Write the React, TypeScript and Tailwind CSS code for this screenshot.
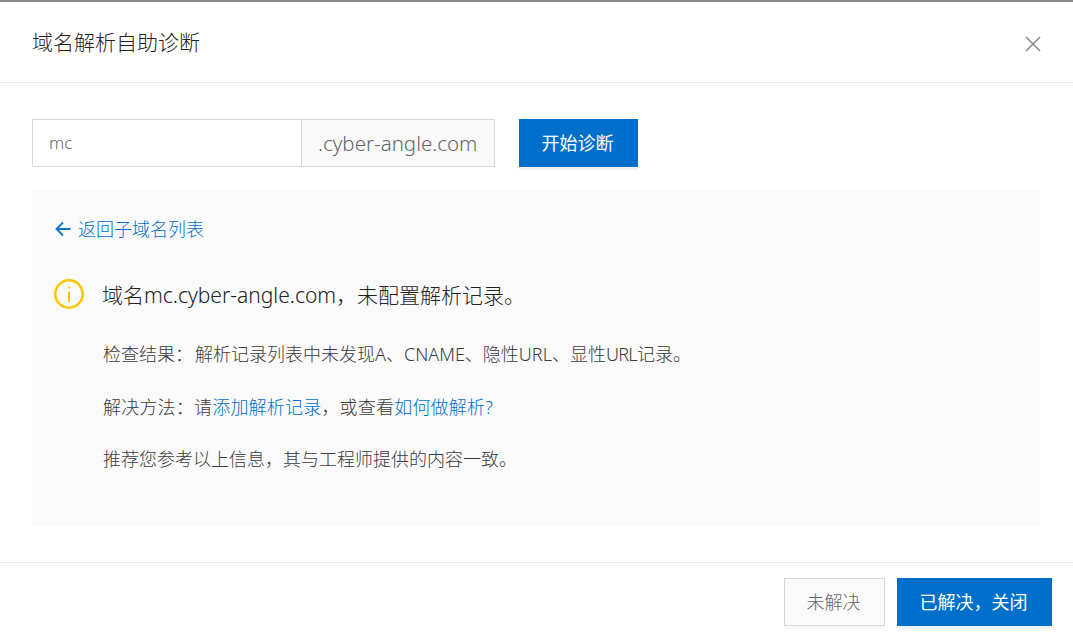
export default function App() {
  return (
    <div className="w-[1073px] h-[643px] overflow-hidden bg-white flex flex-col border-t-2 border-[#8a8a8a] font-['Noto_Sans','Noto_Sans_CJK_SC',sans-serif] font-light text-[#333]">
      <header className="h-[81px] shrink-0 border-b border-[#e6ebf0] flex items-center justify-between pl-[32px] pr-[31px]">
        <h1 className="text-[21px] leading-[28px] font-light text-[#222]">域名解析自助诊断</h1>
        <svg width="18" height="18" viewBox="0 0 18 18" className="mt-[4px]" fill="none" stroke="#8f8f8f" strokeWidth="1.7">
          <path d="M2 2 L16 16 M16 2 L2 16" />
        </svg>
      </header>
      <main className="flex-1 px-[32px] pt-[36px]">
        <div className="flex items-start">
          <div className="w-[463px] h-[48px] flex border border-[#d7d8d9]">
            <div className="w-[269px] flex items-center pl-[16px] text-[17px] text-[#666] border-r border-[#d7d8d9]">mc</div>
            <div className="flex-1 bg-[#f9f9f9] flex items-center pl-[16px] text-[20.5px] text-[#666] whitespace-nowrap">.cyber-angle.com</div>
          </div>
          <button className="ml-[24px] w-[119px] h-[48px] bg-[#006fcc] text-white text-[18px] font-normal pr-[2px] shadow-[0_3px_0_#f2f3f5]">开始诊断</button>
        </div>
        <section className="mt-[24px] w-[1008px] h-[335px] bg-[#fafafa] pl-[23px] pt-[24px]">
          <a className="flex items-center text-[#006fcc] text-[18px] leading-[28px]">
            <svg width="16" height="16" viewBox="0 0 16 16" fill="none" stroke="#0a74cf" strokeWidth="1.8" className="mr-[7px]">
              <path d="M15.5 8 H1.5 M8 1.5 L1.5 8 L8 14.5" />
            </svg>
            返回子域名列表
          </a>
          <div className="flex items-center mt-[36px] -ml-[1px]">
            <svg width="30" height="30" viewBox="0 0 30 30" fill="none" stroke="#fdc500" strokeWidth="2.5" className="mr-[18px]">
              <circle cx="15" cy="15" r="13.7" />
              <path d="M15 12.5 V23 M15 7.5 V9.5" strokeWidth="2" />
            </svg>
            <p className="text-[21px] leading-[28px] text-[#222] mt-[2px]">域名mc.cyber-angle.com，未配置解析记录。</p>
          </div>
          <div className="pl-[48px] text-[18px] text-[#3a3a3a] leading-[26px] mt-[32px] flex flex-col gap-[26px]">
            <p>检查结果<span className="mr-[2px]">：</span>解析记录列表中未发现A、CNAME、隐性URL、显性<span className="tracking-[-0.7px]">URL</span>记录。</p>
            <p className="mt-[1px] tracking-[0.2px]">解决方法：请<a className="text-[#006fcc]">添加解析记录</a>，或查看<a className="text-[#006fcc]">如何做解析?</a></p>
            <p>推荐您参考以上信息，其与工程师提供的内容一致。</p>
          </div>
        </section>
      </main>
      <footer className="h-[81px] shrink-0 border-t border-[#e6ebf0] flex justify-end pt-[15px] pr-[21px] gap-[12px]">
        <button className="w-[101px] h-[48px] bg-[#fafafa] border border-[#d7d8d9] text-[18px] text-[#666] pr-[2px] shadow-[0_3px_0_#f8f8f8]">未解决</button>
        <button className="w-[155px] h-[48px] bg-[#006fcc] text-white text-[18px] font-normal pr-[2px] shadow-[0_3px_0_#f2f3f5]">已解决，关闭</button>
      </footer>
    </div>
  );
}
